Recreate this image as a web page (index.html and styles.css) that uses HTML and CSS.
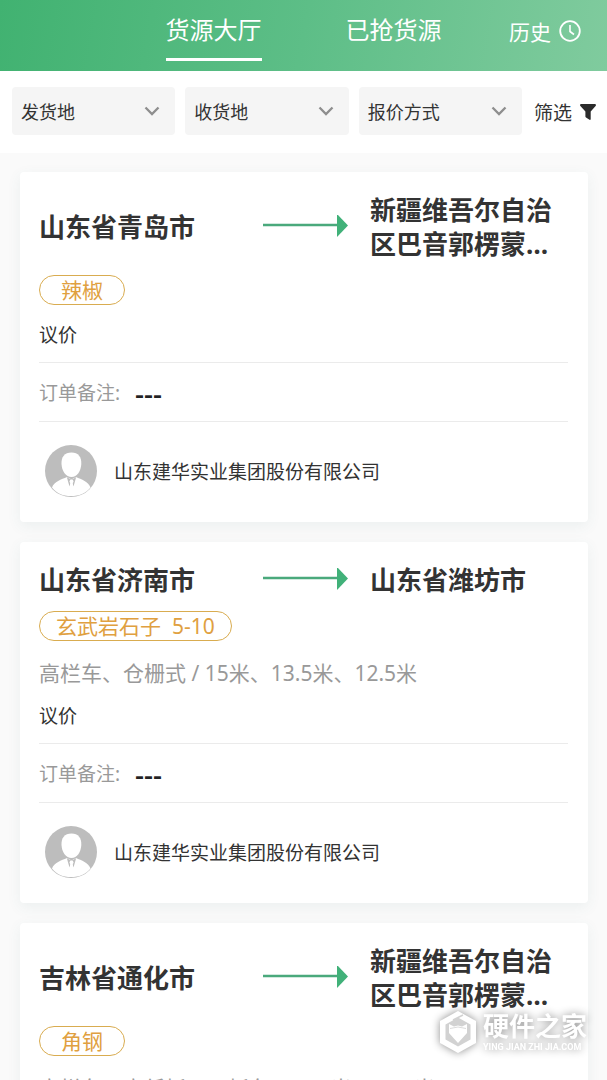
FILE: index.html
```html
<!DOCTYPE html>
<html lang="zh-CN">
<head>
<meta charset="utf-8">
<meta name="viewport" content="width=device-width, initial-scale=1">
<title>货源大厅</title>
<link rel="stylesheet" href="styles.css">
</head>
<body>
<svg class="defs" aria-hidden="true">
  <symbol id="arrow" viewBox="0 0 85 24"><path d="M0 10h75" stroke="#4aa97c" stroke-width="2.4"/><path d="M74-1 85 10.500 74 22z" fill="#41b179"/></symbol>
  <symbol id="chevron" viewBox="0 0 16 10"><path d="M1.500 1.500 8 8l6.500-6.500" fill="none" stroke="#8e8e8e" stroke-width="2.300"/></symbol>
  <symbol id="avatar" viewBox="0 0 52 52">
    <circle cx="26" cy="26" r="26" fill="#bdbdbd"/>
    <path d="M26.500 7.500c-7 0-10.300 4.500-10 11.500.3 7 4.500 13 10 13s9.500-6 9.800-13c.3-7-3-11.500-9.800-11.500z" fill="#fff"/>
    <path d="M7 42.500C9 36.500 16.500 34.500 22 32l4.500 2.500L31 32c5.500 2.500 12.500 4.500 14.500 10.500C41 48.500 34 51 26 51S11.500 48.500 7 42.500z" fill="#fff"/>
    <path d="M21.800 32l2.700 9.500 1.200-4h1.600l1.200 4 2.700-9.500-4.700 3z" fill="#bdbdbd"/>
    <path d="M25 35h3l.6 1.800-1 1.500.8 4h-3.800l.8-4-1-1.500z" fill="#fff"/>
  </symbol>
</svg>

<header class="topbar">
  <nav class="tabs">
    <a class="tab tab-active" href="#hall" aria-current="page">货源大厅</a>
    <a class="tab" href="#taken">已抢货源</a>
  </nav>
  <a class="history" href="#history">历史
    <svg class="clock" viewBox="0 0 22 22" aria-hidden="true"><circle cx="11" cy="11" r="9.800" fill="none" stroke="currentColor" stroke-width="1.800"/><path d="M11 5v6.500l4 3" fill="none" stroke="currentColor" stroke-width="1.600"/></svg>
  </a>
</header>

<form class="filters">
  <div class="picker"><select class="picker-select" aria-label="发货地"><option>发货地</option></select><svg class="chevron" aria-hidden="true"><use href="#chevron"/></svg></div>
  <div class="picker"><select class="picker-select" aria-label="收货地"><option>收货地</option></select><svg class="chevron" aria-hidden="true"><use href="#chevron"/></svg></div>
  <div class="picker"><select class="picker-select" aria-label="报价方式"><option>报价方式</option></select><svg class="chevron" aria-hidden="true"><use href="#chevron"/></svg></div>
  <button class="filter-button" type="button">筛选
    <svg class="funnel" viewBox="0 0 16 16" aria-hidden="true"><path d="M1.200 0h13.600c1 0 1.500 1.200.8 2L10.700 7.500V15c0 .8-.6 1.200-1.200.8L6 13.500c-.4-.2-.6-.6-.6-1v-5L.4 2C-.3 1.200.2 0 1.200 0z" fill="#2b2b2b"/></svg>
  </button>
</form>

<main class="list">
  <article class="card">
    <h2 class="route"><span class="place">山东省青岛市</span><svg class="arrow" aria-hidden="true"><use href="#arrow"/></svg><span class="place">新疆维吾尔自治区巴音郭楞蒙古自治州</span></h2>
    <span class="goods">辣椒</span>
    <p class="price">议价</p>
    <p class="note"><span class="note-label">订单备注:</span><span class="note-value">---</span></p>
    <div class="company"><svg class="avatar" aria-hidden="true"><use href="#avatar"/></svg>山东建华实业集团股份有限公司</div>
  </article>

  <article class="card">
    <h2 class="route"><span class="place">山东省济南市</span><svg class="arrow" aria-hidden="true"><use href="#arrow"/></svg><span class="place">山东省潍坊市</span></h2>
    <span class="goods">玄武岩石子&nbsp; 5-10</span>
    <p class="spec">高栏车、仓栅式 / 15米、13.5米、12.5米</p>
    <p class="price">议价</p>
    <p class="note"><span class="note-label">订单备注:</span><span class="note-value">---</span></p>
    <div class="company"><svg class="avatar" aria-hidden="true"><use href="#avatar"/></svg>山东建华实业集团股份有限公司</div>
  </article>

  <article class="card">
    <h2 class="route"><span class="place">吉林省通化市</span><svg class="arrow" aria-hidden="true"><use href="#arrow"/></svg><span class="place">新疆维吾尔自治区巴音郭楞蒙古自治州</span></h2>
    <span class="goods">角钢</span>
    <p class="spec">高栏车、高低板、平板车 / 13.5米、12.5米</p>
  </article>
</main>

<aside class="watermark">
  <svg class="watermark-logo" viewBox="0 0 38 44" aria-hidden="true">
    <path d="M19 1 37 11v22L19 43 1 33V11z" fill="#fff"/>
    <path d="M19 7.500 31.500 14.500v15L19 36.500 6.500 29.500v-15z" fill="#d2d2d2"/>
    <path d="M10 14l5 2.500 4-1 4 1 5-2.500v9L19 33l-9-10z" fill="#fff"/>
    <path d="M11 18.500 19 17l8 1.500" fill="none" stroke="#d2d2d2" stroke-width=".8"/>
    <path d="M14 10 24 5" stroke="#d2d2d2" stroke-width="1.500"/>
  </svg>
  <span class="watermark-text"><span class="watermark-name">硬件之家</span><span class="watermark-url">YING JIAN ZHI JIA.COM</span></span>
</aside>
</body>
</html>
```
FILE: styles.css
```css
* { box-sizing: border-box; }

body {
  margin: 0;
  height: 100vh;
  overflow: hidden;
  background: #fafafa;
  color: #333;
  font-family: "Noto Sans", "Noto Sans CJK SC", sans-serif;
  font-size: 19px;
}

p, h2 { margin: 0; }
a { color: inherit; text-decoration: none; }
.defs { position: absolute; width: 0; height: 0; }

.topbar {
  display: grid;
  grid-template-columns: 1fr auto 1fr;
  height: 71px;
  padding: 0 26px;
  background: linear-gradient(100deg, #41b271, #5dbe87 50%, #80cb9e);
  color: #fff;
}
.tabs { grid-column: 2; display: flex; gap: 84px; }
.tab { height: 61px; font-size: 24px; line-height: 60px; }
.tab-active { border-bottom: 3px solid #fff; }
.history {
  display: flex;
  align-items: center;
  justify-content: flex-end;
  gap: 8px;
  height: 62px;
  font-size: 21px;
}
.clock { width: 22px; height: 22px; }

.filters {
  display: flex;
  gap: 10px;
  padding: 16px 11px 18px 12px;
  background: #fff;
}
.picker { flex: 1; display: grid; align-items: center; min-width: 0; }
.picker-select {
  grid-area: 1 / 1;
  width: 100%;
  height: 48px;
  padding: 2px 36px 0 9px;
  border: 0;
  border-radius: 4px;
  appearance: none;
  background: #f5f5f5;
  color: #333;
  font: inherit;
  font-size: 18px;
}
.chevron {
  grid-area: 1 / 1;
  justify-self: end;
  width: 16px;
  height: 10px;
  margin-right: 15px;
  pointer-events: none;
}
.filter-button {
  display: flex;
  align-items: center;
  gap: 8px;
  padding: 2px 0 0 2px;
  border: 0;
  background: none;
  color: #333;
  font: inherit;
}
.funnel { width: 16px; height: 16px; }

.list { display: grid; gap: 20px; padding: 19px 19px 20px 20px; }
.card {
  padding: 21px 20px 25px 19px;
  border-radius: 4px;
  background: #fff;
  box-shadow: 0 4px 14px rgba(60, 110, 120, 0.08);
}
.route {
  display: grid;
  grid-template-columns: 202fr 85px 198fr;
  column-gap: 22px;
  align-items: center;
  font-size: 26px;
  font-weight: 700;
  line-height: 34px;
}
.place {
  display: -webkit-box;
  overflow: hidden;
  -webkit-box-orient: vertical;
  -webkit-line-clamp: 2;
}
.arrow { width: 85px; height: 24px; overflow: visible; }
.goods {
  display: block;
  width: fit-content;
  min-width: 86px;
  margin: 14px 0 15px;
  padding: 0 16px;
  border: 1px solid #d9ac50;
  border-radius: 15px;
  color: #e0a040;
  font-size: 21px;
  line-height: 28px;
  text-align: center;
}
.spec { padding: 2px 0 13px; color: #999; font-size: 21px; line-height: 30px; }
.price { padding-bottom: 12px; line-height: 30px; }
.note {
  display: flex;
  gap: 15px;
  height: 60px;
  border: solid #ebebeb;
  border-width: 1px 0;
  line-height: 60px;
}
.note-label { color: #999; }
.note-value { color: #222; font-size: 28px; font-weight: 500; }
.company { display: flex; align-items: center; gap: 17px; padding: 23px 6px 0; }
.avatar { width: 52px; height: 52px; }

.watermark {
  position: fixed;
  right: 20px;
  bottom: 26px;
  display: flex;
  align-items: center;
  gap: 6px;
  color: #fff;
  filter: drop-shadow(0 0 4px rgba(0, 0, 0, 0.45));
}
.watermark-logo { width: 38px; height: 44px; }
.watermark-text { display: grid; }
.watermark-name { font-size: 26px; font-weight: 700; line-height: 30px; }
.watermark-url { font-family: Roboto, sans-serif; font-size: 9px; font-weight: 700; line-height: 12px; }
```
